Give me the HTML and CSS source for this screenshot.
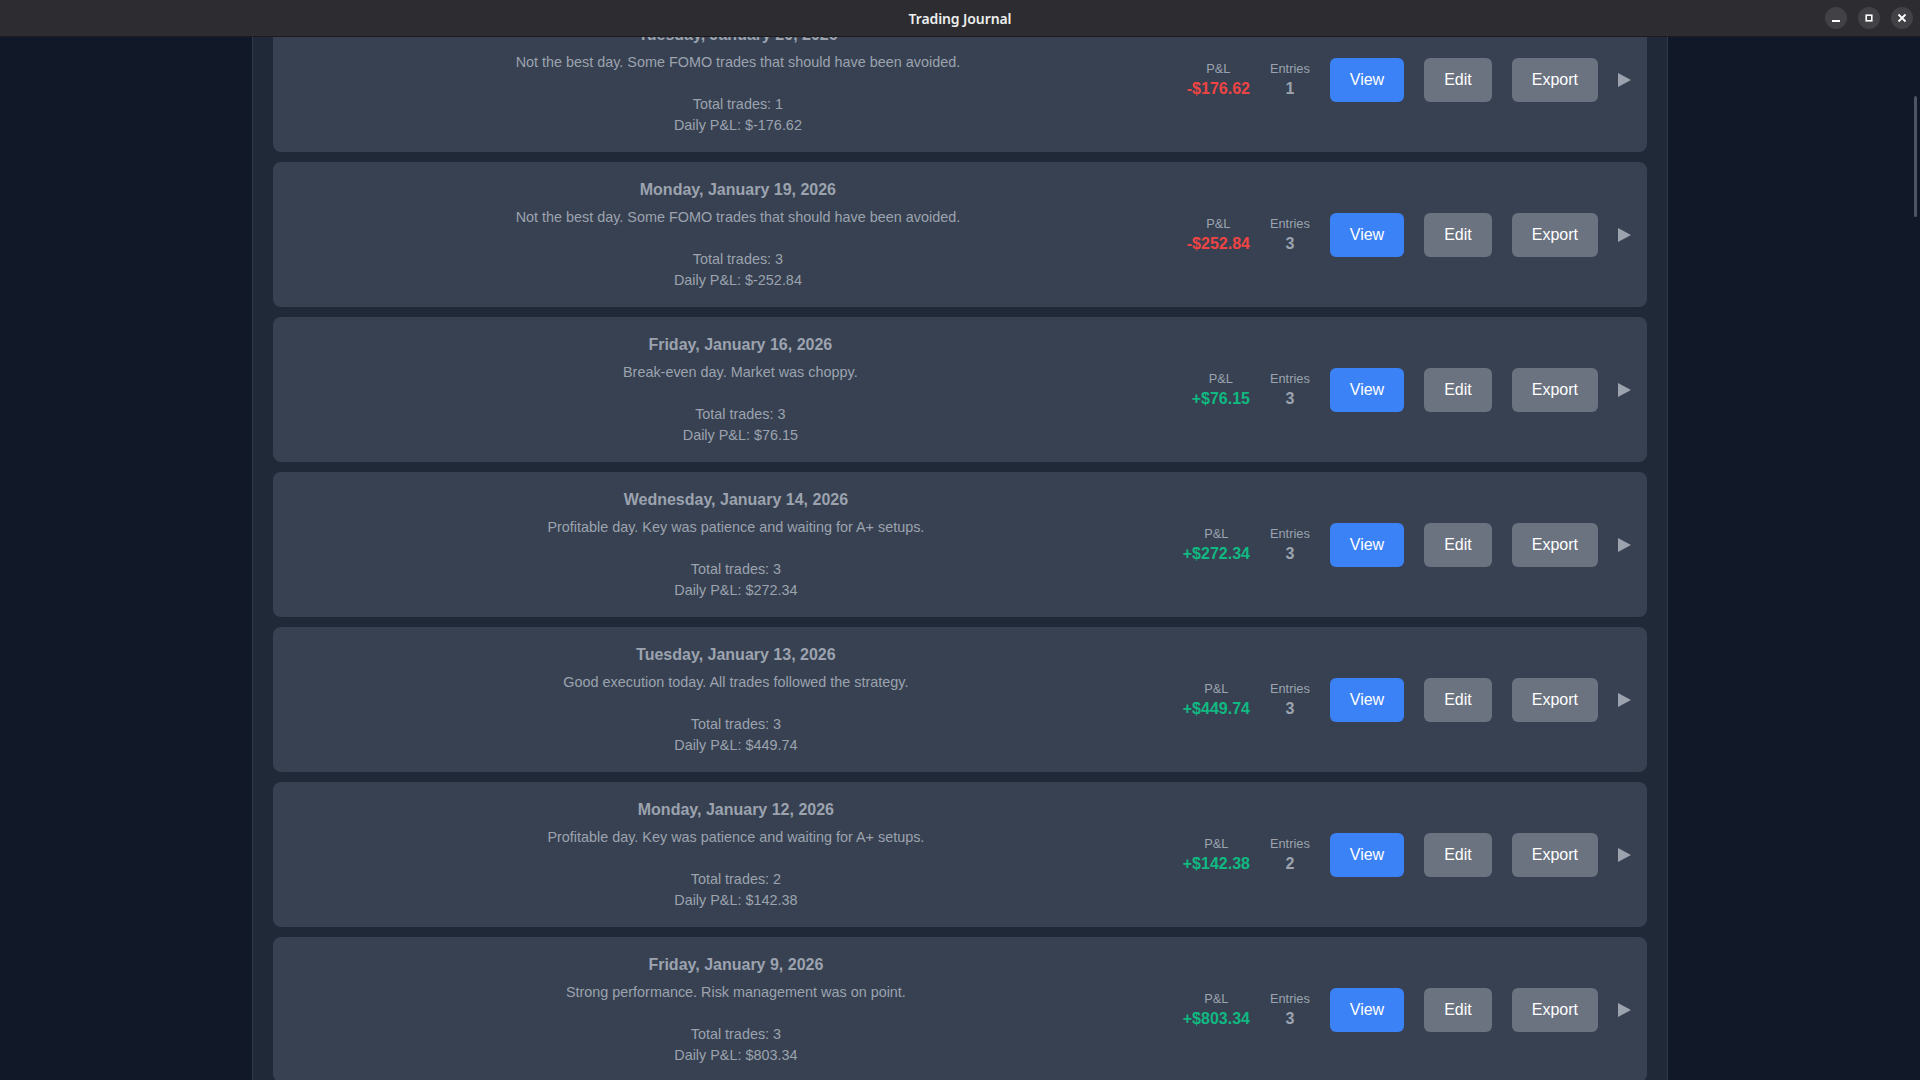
FILE: index.html
```html
<!DOCTYPE html>
<html lang="en">
<head>
<meta charset="utf-8">
<title>Trading Journal</title>
<link rel="stylesheet" href="styles.css">
</head>
<body>
<div class="window">
  <header class="titlebar">
    <span class="title">Trading Journal</span>
    <div class="controls">
      <span class="ctl"><svg width="10" height="10" viewBox="0 0 10 10"><rect x="1" y="7" width="8" height="2" fill="#fff"/></svg></span>
      <span class="ctl"><svg width="10" height="10" viewBox="0 0 10 10"><rect x="2.2" y="2.2" width="5.6" height="5.6" fill="none" stroke="#fff" stroke-width="1.6"/></svg></span>
      <span class="ctl"><svg width="10" height="10" viewBox="0 0 10 10"><path d="M1.5 1.5 L8.5 8.5 M8.5 1.5 L1.5 8.5" stroke="#fff" stroke-width="1.8"/></svg></span>
    </div>
  </header>
  <main class="viewport">
    <section class="container">
      <div class="list">
        <article class="card">
          <div class="info">
            <div class="date">Tuesday, January 20, 2026</div>
            <div class="notes">Not the best day. Some FOMO trades that should have been avoided.

Total trades: 1
Daily P&amp;L: $-176.62</div>
          </div>
          <div class="side">
            <div class="stat"><div class="label">P&amp;L</div><div class="value loss">-$176.62</div></div>
            <div class="stat"><div class="label">Entries</div><div class="value">1</div></div>
            <button class="btn primary">View</button>
            <button class="btn">Edit</button>
            <button class="btn">Export</button>
            <span class="arrow"></span>
          </div>
        </article>
        <article class="card">
          <div class="info">
            <div class="date">Monday, January 19, 2026</div>
            <div class="notes">Not the best day. Some FOMO trades that should have been avoided.

Total trades: 3
Daily P&amp;L: $-252.84</div>
          </div>
          <div class="side">
            <div class="stat"><div class="label">P&amp;L</div><div class="value loss">-$252.84</div></div>
            <div class="stat"><div class="label">Entries</div><div class="value">3</div></div>
            <button class="btn primary">View</button>
            <button class="btn">Edit</button>
            <button class="btn">Export</button>
            <span class="arrow"></span>
          </div>
        </article>
        <article class="card">
          <div class="info">
            <div class="date">Friday, January 16, 2026</div>
            <div class="notes">Break-even day. Market was choppy.

Total trades: 3
Daily P&amp;L: $76.15</div>
          </div>
          <div class="side">
            <div class="stat"><div class="label">P&amp;L</div><div class="value gain">+$76.15</div></div>
            <div class="stat"><div class="label">Entries</div><div class="value">3</div></div>
            <button class="btn primary">View</button>
            <button class="btn">Edit</button>
            <button class="btn">Export</button>
            <span class="arrow"></span>
          </div>
        </article>
        <article class="card">
          <div class="info">
            <div class="date">Wednesday, January 14, 2026</div>
            <div class="notes">Profitable day. Key was patience and waiting for A+ setups.

Total trades: 3
Daily P&amp;L: $272.34</div>
          </div>
          <div class="side">
            <div class="stat"><div class="label">P&amp;L</div><div class="value gain">+$272.34</div></div>
            <div class="stat"><div class="label">Entries</div><div class="value">3</div></div>
            <button class="btn primary">View</button>
            <button class="btn">Edit</button>
            <button class="btn">Export</button>
            <span class="arrow"></span>
          </div>
        </article>
        <article class="card">
          <div class="info">
            <div class="date">Tuesday, January 13, 2026</div>
            <div class="notes">Good execution today. All trades followed the strategy.

Total trades: 3
Daily P&amp;L: $449.74</div>
          </div>
          <div class="side">
            <div class="stat"><div class="label">P&amp;L</div><div class="value gain">+$449.74</div></div>
            <div class="stat"><div class="label">Entries</div><div class="value">3</div></div>
            <button class="btn primary">View</button>
            <button class="btn">Edit</button>
            <button class="btn">Export</button>
            <span class="arrow"></span>
          </div>
        </article>
        <article class="card">
          <div class="info">
            <div class="date">Monday, January 12, 2026</div>
            <div class="notes">Profitable day. Key was patience and waiting for A+ setups.

Total trades: 2
Daily P&amp;L: $142.38</div>
          </div>
          <div class="side">
            <div class="stat"><div class="label">P&amp;L</div><div class="value gain">+$142.38</div></div>
            <div class="stat"><div class="label">Entries</div><div class="value">2</div></div>
            <button class="btn primary">View</button>
            <button class="btn">Edit</button>
            <button class="btn">Export</button>
            <span class="arrow"></span>
          </div>
        </article>
        <article class="card">
          <div class="info">
            <div class="date">Friday, January 9, 2026</div>
            <div class="notes">Strong performance. Risk management was on point.

Total trades: 3
Daily P&amp;L: $803.34</div>
          </div>
          <div class="side">
            <div class="stat"><div class="label">P&amp;L</div><div class="value gain">+$803.34</div></div>
            <div class="stat"><div class="label">Entries</div><div class="value">3</div></div>
            <button class="btn primary">View</button>
            <button class="btn">Edit</button>
            <button class="btn">Export</button>
            <span class="arrow"></span>
          </div>
        </article>
      </div>
    </section>
    <div class="scrollbar"></div>
  </main>
</div>
</body>
</html>
```
FILE: styles.css
```css
* { box-sizing: border-box; }
html, body { margin: 0; padding: 0; height: 100%; }
body {
  background: #111827;
  font-family: "Liberation Sans", Arial, sans-serif;
  overflow: hidden;
}
.window {
  display: flex;
  flex-direction: column;
  height: 100vh;
}
.titlebar {
  position: relative;
  height: 37px;
  flex: 0 0 37px;
  background: #2d2d31;
  border-bottom: 1px solid #1b1b1e;
  display: flex;
  align-items: center;
  justify-content: center;
}
.title {
  font-family: "Noto Sans", "DejaVu Sans", sans-serif;
  font-size: 14px;
  font-weight: 600;
  color: #eeeeee;
  letter-spacing: -0.1px;
}
.controls {
  position: absolute;
  right: 7px;
  top: 7px;
  display: flex;
  gap: 11px;
}
.ctl {
  width: 22px;
  height: 22px;
  border-radius: 50%;
  background: #414146;
  display: flex;
  align-items: center;
  justify-content: center;
}
.viewport {
  position: relative;
  flex: 1;
  overflow: hidden;
  display: flex;
  justify-content: center;
}
.container {
  width: 1416px;
  height: 100%;
  background: #1f2937;
  border-left: 1px solid #2e3a4b;
  border-right: 1px solid #2e3a4b;
  padding: 0 20px;
}
.list {
  margin-top: -30px;
  display: flex;
  flex-direction: column;
  gap: 10px;
}
.card {
  background: #374151;
  border-radius: 8px;
  padding: 16px;
  display: flex;
  align-items: center;
  height: 145px;
}
.info {
  flex: 1;
  text-align: center;
  color: #9ca3af;
}
.date {
  font-size: 16px;
  font-weight: 700;
  line-height: 24px;
  margin-bottom: 5px;
}
.notes {
  font-size: 14.4px;
  line-height: 21px;
  white-space: pre-line;
}
.side {
  display: flex;
  align-items: center;
  gap: 20px;
}
.stat {
  text-align: center;
  display: flex;
  flex-direction: column;
  align-items: center;
}
.label {
  font-size: 12.8px;
  color: #9ca3af;
  line-height: 15px;
  margin-bottom: 4px;
}
.value {
  font-size: 16px;
  font-weight: 700;
  line-height: 18px;
  color: #9ca3af;
}
.value.loss { color: #ef4444; }
.value.gain { color: #10b981; }
.btn {
  font-family: "Liberation Sans", Arial, sans-serif;
  font-size: 16px;
  line-height: 20px;
  padding: 12px 20px;
  border: none;
  border-radius: 6px;
  background: #6b7280;
  color: #ffffff;
}
.btn.primary { background: #3b82f6; }
.arrow {
  width: 0;
  height: 0;
  border-left: 13px solid #9ca3af;
  border-top: 7px solid transparent;
  border-bottom: 7px solid transparent;
  margin-top: 1px;
}
.scrollbar {
  position: absolute;
  right: 3px;
  top: 59px;
  width: 3px;
  height: 121px;
  background: #4b5563;
  border-radius: 2px;
}
```
